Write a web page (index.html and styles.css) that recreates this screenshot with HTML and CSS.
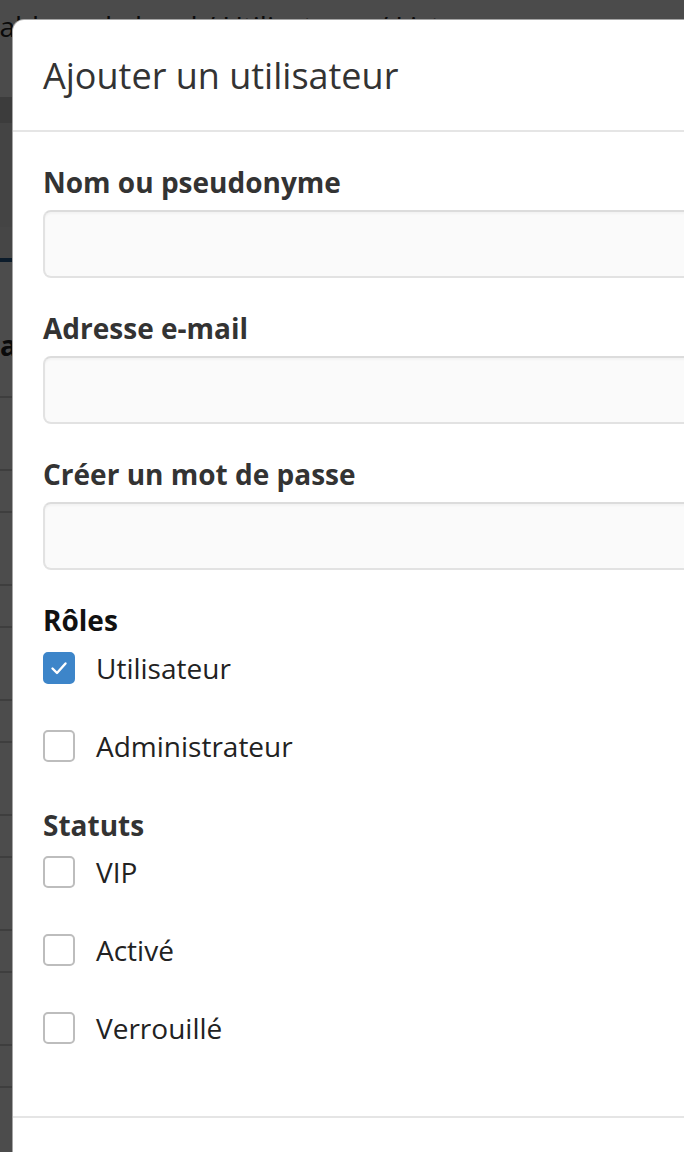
FILE: index.html
```
<!DOCTYPE html>
<html lang="fr">
<head>
<meta charset="utf-8">
<title>Ajouter un utilisateur</title>
<link rel="stylesheet" href="styles.css">
</head>
<body>
<div class="page">
  <div class="topbar"><span class="crumbs">Tableau de bord / Utilisateurs / Liste</span></div>
  <div class="tabs"></div>
  <div class="hero"></div>
  <div class="subbar"></div>
  <div class="thead">a</div>
  <div class="trow tall"></div>
  <div class="trow"></div>
  <div class="trow tall"></div>
  <div class="trow"></div>
  <div class="trow tall"></div>
  <div class="trow"></div>
  <div class="trow tall"></div>
  <div class="trow"></div>
  <div class="trow tall"></div>
  <div class="trow"></div>
  <div class="trow tall"></div>
  <div class="trow"></div>
</div>
<div class="backdrop"></div>
<div class="modal">
  <div class="modal-header">
    <h4 class="modal-title">Ajouter un utilisateur</h4>
  </div>
  <div class="modal-body">
    <div class="form-group">
      <label class="field-label">Nom ou pseudonyme</label>
      <input class="field" type="text">
    </div>
    <div class="form-group">
      <label class="field-label">Adresse e-mail</label>
      <input class="field" type="email">
    </div>
    <div class="form-group">
      <label class="field-label">Créer un mot de passe</label>
      <input class="field" type="password">
    </div>
    <div class="group-title">Rôles</div>
    <div class="check-row"><span class="box checked"><svg viewBox="0 0 32 32" width="32" height="32"><path d="M9.5 16.5 L14 21 L22.5 11.5" fill="none" stroke="#fff" stroke-width="2.4" stroke-linecap="round" stroke-linejoin="round"/></svg></span><span class="check-text">Utilisateur</span></div>
    <div class="check-row"><span class="box"></span><span class="check-text">Administrateur</span></div>
    <div class="group-title status">Statuts</div>
    <div class="check-row"><span class="box"></span><span class="check-text">VIP</span></div>
    <div class="check-row"><span class="box"></span><span class="check-text">Activé</span></div>
    <div class="check-row"><span class="box"></span><span class="check-text">Verrouillé</span></div>
  </div>
  <div class="modal-footer"></div>
</div>
</body>
</html>
```
FILE: styles.css
```
html, body {
  margin: 0;
  padding: 0;
}
body {
  width: 684px;
  height: 1152px;
  overflow: hidden;
  position: relative;
  font-family: "Open Sans", "Liberation Sans", sans-serif;
  background: #fff;
}
.page {
  display: flex;
  flex-direction: column;
}
.topbar {
  height: 97px;
  background: #fafafa;
  overflow: hidden;
  white-space: nowrap;
}
.crumbs {
  display: block;
  margin-left: -16px;
  padding-top: 6px;
  font-size: 28px;
  line-height: 40px;
  color: #222;
}
.tabs {
  height: 26px;
  background: #c8c8c8;
}
.hero {
  height: 104px;
  background: #e4e4e4;
}
.subbar {
  height: 31px;
  background: #ececec;
  border-bottom: 4px solid #2a5f8f;
}
.thead {
  height: 136px;
  box-sizing: border-box;
  border-bottom: 2px solid #cfcfcf;
  font-weight: 700;
  font-size: 28px;
  line-height: 40px;
  padding-top: 63px;
  color: #222;
}
.trow {
  height: 42px;
  border-bottom: 2px solid #cfcfcf;
  box-sizing: border-box;
}
.trow.tall {
  height: 73px;
}
.backdrop {
  position: absolute;
  inset: 0;
  background: rgba(0, 0, 0, 0.7);
}
.modal {
  position: absolute;
  left: 12px;
  top: 19px;
  width: 720px;
  height: 1200px;
  background: #fff;
  border: 1px solid rgba(0, 0, 0, 0.35);
  border-radius: 12px 0 0 0;
  box-sizing: border-box;
  border-right: none;
  border-bottom: none;
}
.modal-header {
  padding: 30px 30px 29px;
  border-bottom: 2px solid #e5e5e5;
}
.modal-title {
  margin: 0;
  font-size: 36px;
  font-weight: 400;
  line-height: 51px;
  color: #333;
}
.modal-body {
  padding: 30px 30px 68px;
}
.form-group {
  margin-bottom: 30px;
}
.field-label {
  display: block;
  font-size: 28px;
  font-weight: 700;
  line-height: 40px;
  color: #333;
  margin-bottom: 8px;
}
.field {
  display: block;
  width: 100%;
  height: 68px;
  box-sizing: border-box;
  background: #fafafa;
  border: 2px solid #e2e2e2;
  border-top-color: #dcdcdc;
  border-radius: 8px;
  box-shadow: inset 0 2px 2px rgba(0, 0, 0, 0.03);
  font: inherit;
  padding: 0 20px;
  margin: 0;
  outline: none;
}
.group-title {
  font-size: 28px;
  font-weight: 700;
  line-height: 40px;
  color: #111;
  margin-bottom: 8px;
}
.group-title.status {
  margin-top: 39px;
  margin-bottom: 7px;
  color: #333;
}
.check-row {
  display: flex;
  align-items: center;
  gap: 21px;
  height: 40px;
}
.check-row + .check-row {
  margin-top: 38px;
}
.box {
  width: 32px;
  height: 32px;
  box-sizing: border-box;
  border: 2px solid #bdbdbd;
  border-radius: 5px;
  background: #fff;
  flex: none;
  position: relative;
}
.box.checked {
  background: #3d85c9;
  border-color: #3d85c9;
}
.box svg {
  position: absolute;
  left: -2px;
  top: -2px;
}
.check-text {
  font-size: 28px;
  line-height: 40px;
  color: #222;
}
.modal-footer {
  border-top: 2px solid #e5e5e5;
  height: 100px;
}
```
